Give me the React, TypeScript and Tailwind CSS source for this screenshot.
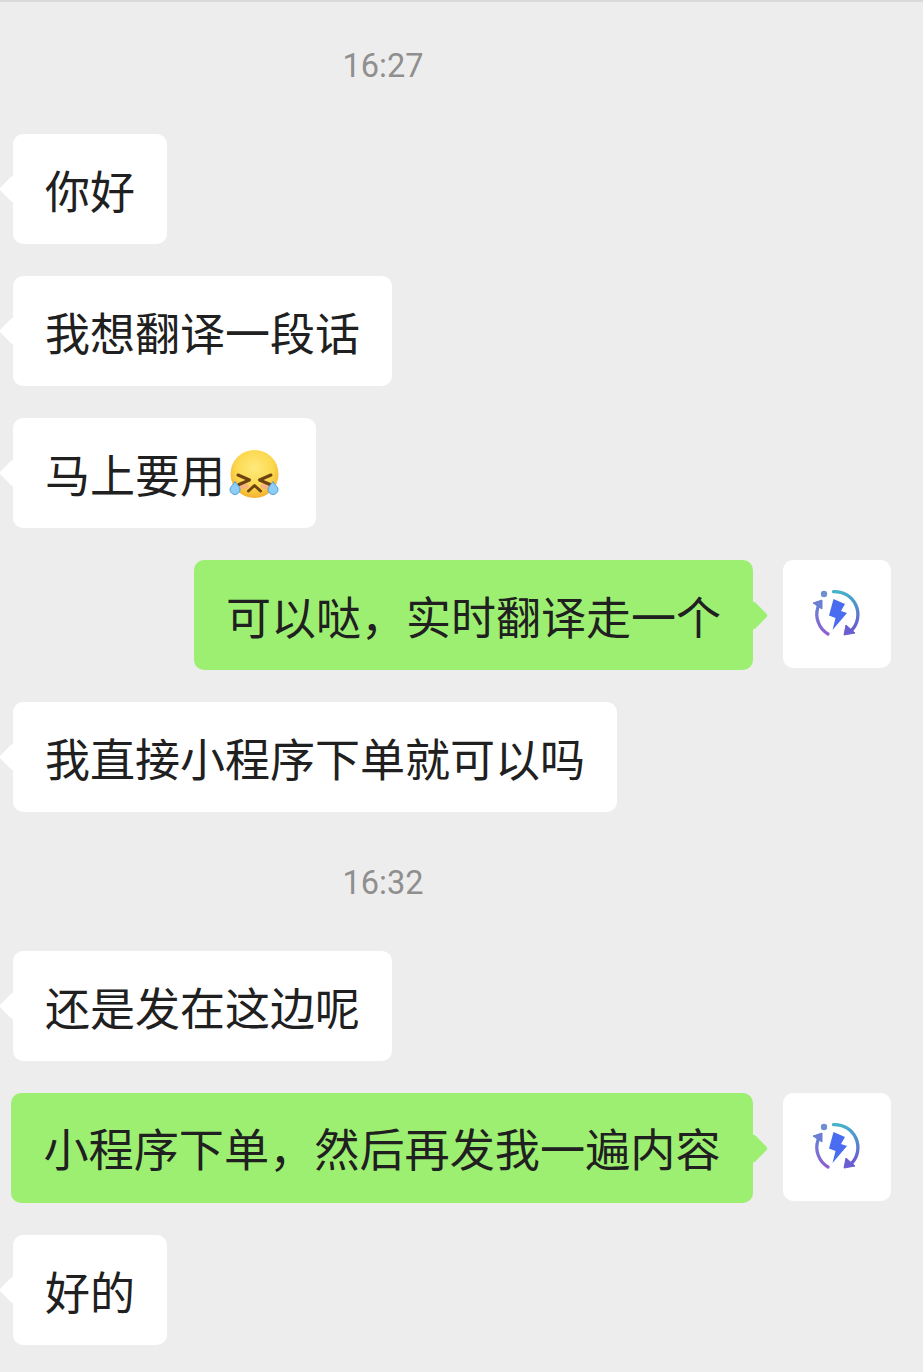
import React from "react";

const CJK = "font-['Noto_Sans_CJK_SC','Liberation_Sans',sans-serif]";

function Emoji() {
  return (
    <svg viewBox="0 0 52 52" className="h-[52px] w-[52px] shrink-0">
      <defs>
        <radialGradient id="face" cx="50%" cy="38%" r="65%">
          <stop offset="0%" stopColor="#feea7c" />
          <stop offset="60%" stopColor="#fcd84e" />
          <stop offset="100%" stopColor="#f2ac2c" />
        </radialGradient>
      </defs>
      <circle cx="26.5" cy="27" r="24" fill="url(#face)" />
      <ellipse cx="15" cy="39" rx="6" ry="3" fill="#f9a98e" opacity="0.8" />
      <ellipse cx="38" cy="39" rx="6" ry="3" fill="#f9a98e" opacity="0.8" />
      <path d="M10 28 L21.5 33 L11 37.5" fill="none" stroke="#6e4312" strokeWidth="3" strokeLinecap="round" strokeLinejoin="round" />
      <path d="M43 28 L31.5 33 L42 37.5" fill="none" stroke="#6e4312" strokeWidth="3" strokeLinecap="round" strokeLinejoin="round" />
      <path d="M20.5 44 L26.5 38.5 L32.5 44" fill="none" stroke="#6e4312" strokeWidth="3" strokeLinecap="round" strokeLinejoin="round" />
      <path d="M7 34.5 C5.5 38 2 39.5 2 42.5 A5 5 0 0 0 12 42.5 C12 40 9 37.5 7 34.5Z" fill="#8ccdf5" stroke="#4f9fdc" strokeWidth="1" />
      <path d="M45 34.5 C46.5 38 50 39.5 50 42.5 A5 5 0 0 1 40 42.5 C40 40 43 37.5 45 34.5Z" fill="#8ccdf5" stroke="#4f9fdc" strokeWidth="1" />
    </svg>
  );
}

function Logo({ id }: { id: string }) {
  return (
    <div className="flex h-[108px] w-[108px] shrink-0 items-center justify-center rounded-[10px] bg-white">
      <svg viewBox="0 0 52 52" className="h-[52px] w-[52px]">
        <defs>
          <linearGradient id={`${id}r`} x1="0.2" y1="0" x2="0.5" y2="1">
            <stop offset="0%" stopColor="#45b4c8" />
            <stop offset="55%" stopColor="#4f8fd0" />
            <stop offset="100%" stopColor="#6a5fd0" />
          </linearGradient>
          <linearGradient id={`${id}l`} x1="0.5" y1="0" x2="0.5" y2="1">
            <stop offset="0%" stopColor="#6a7fd4" />
            <stop offset="100%" stopColor="#8d5fd2" />
          </linearGradient>
        </defs>
        <circle cx="13" cy="6" r="3.2" fill="#6f8fce" />
        <path d="M22.5 3.6 A23 23 0 0 1 40 43" fill="none" stroke={`url(#${id}r)`} strokeWidth="3.3" strokeLinecap="round" />
        <path d="M33 47 L35 37 L44 45 Z" fill="#6a5fd0" strokeLinejoin="round" stroke="#6a5fd0" />
        <path d="M7 19 A23 23 0 0 0 17 46" fill="none" stroke={`url(#${id}l)`} strokeWidth="3.3" strokeLinecap="round" />
        <path d="M11 12 L2 15 L11 21 Z" fill="#6a7fd4" strokeLinejoin="round" stroke="#6a7fd4" />
        <path d="M22.5 11 L34 16 L30 23 L36 25 L21.5 42 L24.5 30 L18 27.5 Z" fill="#4a6cf0" />
      </svg>
    </div>
  );
}

function Time({ children }: { children: string }) {
  return (
    <div className="flex h-[42px] w-[766px] items-center justify-center pt-[2px] font-['Roboto',sans-serif] text-[32.5px] leading-none text-[#8f8f8f]">
      {children}
    </div>
  );
}

function Incoming({ text, emoji }: { text: string; emoji?: boolean }) {
  return (
    <div className="flex justify-start pl-[13px]">
      <div className="relative flex h-[110px] items-center rounded-[10px] bg-white px-8">
        <span className="absolute left-[-10px] top-[45px] h-5 w-5 rotate-45 rounded-[3px] bg-white" />
        <span className={`relative whitespace-nowrap text-[45px] leading-none text-[#202020] ${CJK}`}>{text}</span>
        {emoji && (
          <span className="relative ml-[3px] flex w-[56px]">
            <Emoji />
          </span>
        )}
      </div>
    </div>
  );
}

function Outgoing({ text, wide, id }: { text: string; wide?: boolean; id: string }) {
  return (
    <div className="flex items-start justify-end gap-[30px] pr-8">
      <div className={`relative flex h-[110px] items-center justify-center rounded-[10px] bg-[#9def72] px-8 ${wide ? "w-[742px]" : ""}`}>
        <span className="absolute right-[-10.5px] top-[44.5px] h-[21px] w-[21px] rotate-45 rounded-[3px] bg-[#9def72]" />
        <span className={`relative whitespace-nowrap leading-none text-[#202020] ${wide ? "text-[45.15px]" : "text-[45px]"} ${CJK}`}>{text}</span>
      </div>
      <Logo id={id} />
    </div>
  );
}

export default function App() {
  return (
    <div className="h-[1372px] w-[923px] overflow-hidden border-t-2 border-[#d9d9d9] bg-[#ededed] pt-[42px]">
      <Time>16:27</Time>
      <div className="mt-[48px] flex flex-col gap-8">
        <Incoming text="你好" />
        <Incoming text="我想翻译一段话" />
        <Incoming text="马上要用" emoji />
        <Outgoing text="可以哒，实时翻译走一个" id="a" />
        <Incoming text="我直接小程序下单就可以吗" />
      </div>
      <div className="mt-[49px]">
        <Time>16:32</Time>
      </div>
      <div className="mt-[48px] flex flex-col gap-8">
        <Incoming text="还是发在这边呢" />
        <Outgoing text="小程序下单，然后再发我一遍内容" wide id="b" />
        <Incoming text="好的" />
      </div>
    </div>
  );
}
